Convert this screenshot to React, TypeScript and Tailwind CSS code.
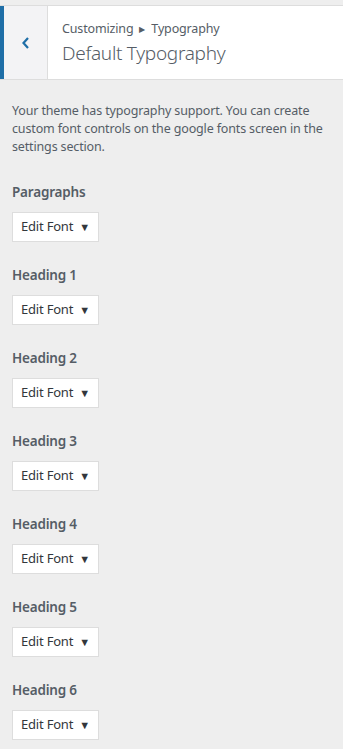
import React from "react";

const sections = ["Paragraphs", "Heading 1", "Heading 2", "Heading 3", "Heading 4", "Heading 5", "Heading 6"];

export default function App() {
  return (
    <div className="w-[343px] min-h-[749px] bg-[#eeeeee] text-[#555d66]" style={{ fontFamily: '"Noto Sans", "Open Sans", sans-serif' }}>
      <div className="h-[5px]" />
      <div className="flex h-[75px] bg-white border-y border-[#dddddd]">
        <div className="w-[48px] flex items-center justify-center bg-[#f3f3f5] border-l-4 border-[#1e6ea7] border-r border-r-[#dddddd]">
          <svg width="12" height="14" viewBox="0 0 12 14" fill="none">
            <path d="M8 2 L3.5 7 L8 12" stroke="#1e6ea7" strokeWidth="2.2" />
          </svg>
        </div>
        <div className="flex flex-col justify-center pl-[14px] pt-[1px]">
          <div className="text-[12.5px] tracking-[-0.15px] leading-[18px] flex items-center">
            Customizing
            <span className="text-[8px] mx-[6px] leading-none">▶</span>
            Typography
          </div>
          <div className="text-[19px] tracking-[-0.3px] font-light leading-[28px] mt-[1px]">Default Typography</div>
        </div>
      </div>
      <div className="px-[12px] pt-[22px]">
        <p className="text-[12.5px] tracking-[-0.15px] leading-[18px] text-[#555d66]">
          Your theme has typography support. You can create custom font controls on the google fonts screen in the settings section.
        </p>
        <div className="mt-[26px] flex flex-col gap-[23px]">
          {sections.map((s) => (
            <div key={s}>
              <div className="text-[13.5px] tracking-[-0.2px] font-semibold leading-[20px]">{s}</div>
              <div className="mt-[10px] w-[87px] h-[30px] bg-white border border-[#dddddd] flex items-center pl-[8px] pr-[8px] justify-between text-[13px] tracking-[-0.2px] text-[#32373c]">
                <span>Edit Font</span>
                <span className="text-[11px]">▼</span>
              </div>
            </div>
          ))}
        </div>
      </div>
    </div>
  );
}
